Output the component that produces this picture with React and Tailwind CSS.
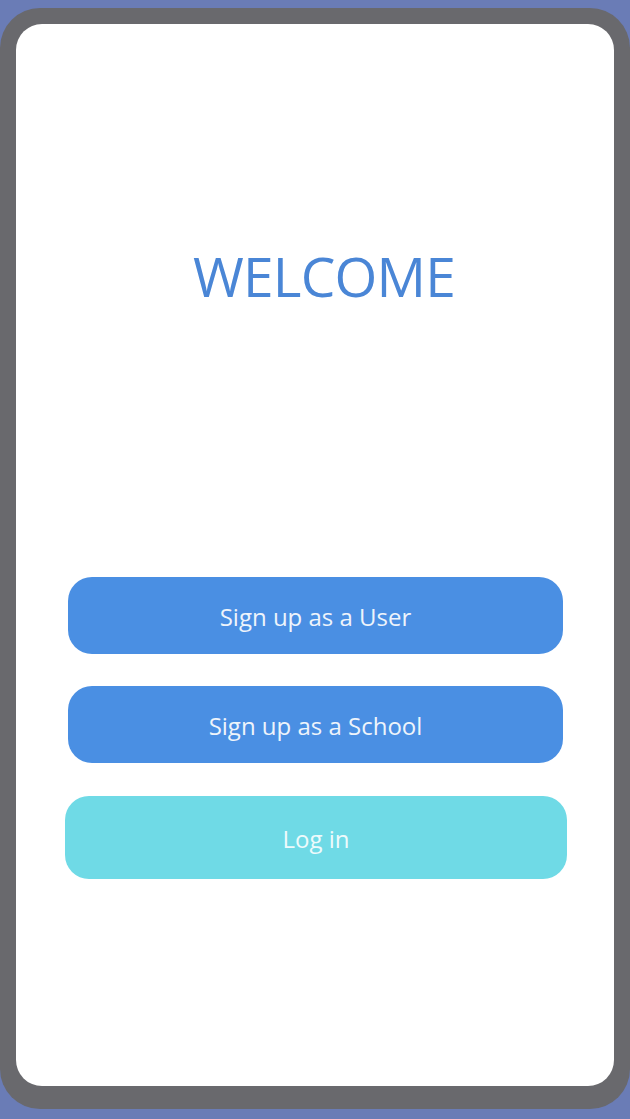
export default function App() {
  return (
    <div className="w-[630px] h-[1119px] bg-[#6a7cb6] pt-[8px] pb-[10px] font-['Open_Sans',sans-serif]">
      <div className="h-full bg-[#69696d] rounded-[40px] px-[16px] pt-[16px] pb-[23px]">
        <div className="h-full bg-white rounded-[26px] flex flex-col items-center">
          <h1 className="mt-[214px] text-[55px] font-normal text-[#4a86d6] tracking-[-0.8px] leading-[76px] ml-[18px]">WELCOME</h1>
          <div className="mt-[263px] w-full flex flex-col items-center">
            <button className="w-[495px] h-[77px] rounded-[24px] bg-[#4a8fe3] text-[#eef4fb] text-[24px] ml-[1px] pt-[3px]">Sign up as a User</button>
            <button className="mt-[32px] w-[495px] h-[77px] rounded-[24px] bg-[#4a8fe3] text-[#eef4fb] text-[24px] ml-[1px] pt-[3px]">Sign up as a School</button>
            <button className="mt-[33px] w-[502px] h-[83px] rounded-[24px] bg-[#6fdae6] text-[#eefafc] text-[24px] ml-[2px] pt-[3px]">Log in</button>
          </div>
        </div>
      </div>
    </div>
  );
}
